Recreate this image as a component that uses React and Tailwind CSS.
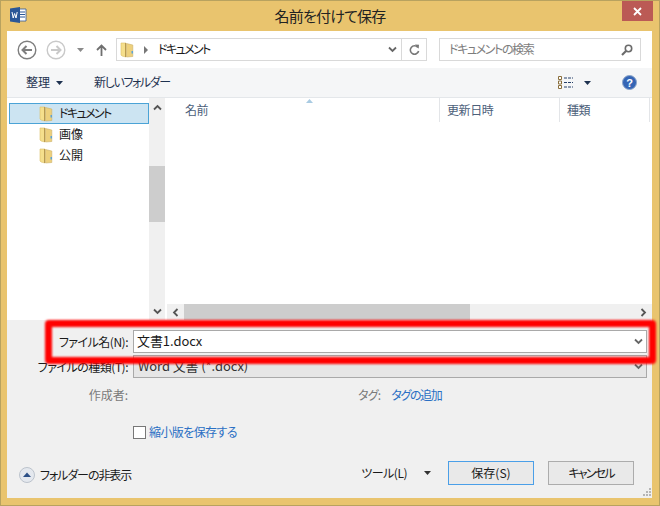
const font = { fontFamily: '"Noto Sans CJK JP","Liberation Sans",sans-serif', fontFeatureSettings: '"palt"' };

function Folder({ className = "" }) {
  return (
    <svg width="14" height="16" viewBox="0 0 14 16" className={className}>
      <path d="M1 1h5v14l-4-1-1-1z" fill="#f5df8c" stroke="#dcc06a" strokeWidth=".6" />
      <path d="M6.5 1.5 12.8 3v11.5L6.5 15z" fill="#edd07c" stroke="#cbb06a" strokeWidth=".6" />
      <path d="M5.5 1v14" stroke="#b89a50" strokeWidth="1" />
      <rect x="11.5" y="9" width="1.5" height="2.5" fill="#5aa3d8" />
    </svg>
  );
}

function Chevron({ up = false, color = "#666", className = "" }) {
  return (
    <svg width="9" height="7" viewBox="0 0 9 7" className={className}>
      <path d={up ? "M1 5.5 4.5 2 8 5.5" : "M1 1.5 4.5 5 8 1.5"} fill="none" stroke={color} strokeWidth="1.8" />
    </svg>
  );
}

function Caret({ color = "#1e3250" }) {
  return (
    <svg width="7" height="4" viewBox="0 0 7 4">
      <path d="M0 0h7L3.5 4z" fill={color} />
    </svg>
  );
}

function WordIcon() {
  return (
    <svg width="17" height="16" viewBox="0 0 17 16">
      <path d="M8 2h8v12H8z" fill="#fff" stroke="#2b5797" strokeWidth=".8" />
      <path d="M10 5h5M10 7.5h5M10 10h5" stroke="#2b5797" strokeWidth="1" />
      <path d="M0 1.5 10 0v16L0 14.5z" fill="#2b5797" />
      <path d="M2 5l1.2 6 1.4-4.5L6 11l1.2-6" fill="none" stroke="#fff" strokeWidth="1" />
    </svg>
  );
}

function NavCircle({ color, flip = false }) {
  return (
    <svg width="20" height="20" viewBox="0 0 20 20">
      <circle cx="10" cy="10" r="8.8" fill="#fff" stroke={color} strokeWidth="1.4" />
      <path d={flip ? "M5 10h9M10.5 6l4 4-4 4" : "M15 10H6M9.5 6 5.5 10l4 4"} fill="none" stroke={color} strokeWidth="2" />
    </svg>
  );
}

function Row({ active, label, className = "" }) {
  return (
    <div className={`h-[21px] flex items-center border ${active ? "bg-[#cce4f2] border-[#4ba3d6]" : "border-transparent"}`}>
      <Folder className="ml-[29px]" />
      <span className={`ml-[6px] mb-[1px] text-[12px] text-[#1a1a1a] ${className}`}>{label}</span>
    </div>
  );
}

function Header({ label, w }) {
  return (
    <div className="h-[24px] flex items-center border-r border-[#e3e5e8] shrink-0" style={{ width: w }}>
      <span className="ml-[7px] text-[12px] tracking-[-0.4px] text-[#4c607a]">{label}</span>
    </div>
  );
}

function Field({ label, children }) {
  return (
    <div className="flex items-center h-[23px]">
      <div className="w-[121px] mr-[5px] text-right text-[12px] tracking-[-0.5px] whitespace-nowrap text-[#1a1a1a]">{label}</div>
      {children}
    </div>
  );
}

export default function App() {
  return (
    <div style={font} className="relative w-[660px] h-[506px] bg-[#e9c46e] border border-[#b8a25f] flex flex-col overflow-hidden">
      <div className="h-[30px] shrink-0 relative flex items-center justify-center">
        <div className="absolute left-[9px] top-[6px]"><WordIcon /></div>
        <span className="text-[15px] tracking-[-0.8px] text-[#222]">名前を付けて保存</span>
        <div className="absolute right-[6px] top-0 w-[31px] h-[20px] bg-[#bb5a55] flex items-center justify-center">
          <svg width="9" height="9" viewBox="0 0 9 9"><path d="M1 1l7 7M8 1 1 8" stroke="#fff" strokeWidth="1.8" /></svg>
        </div>
      </div>

      <div className="ml-[6px] mr-[7px] h-[467px] shrink-0 flex flex-col bg-[#f0f0f0]">
        <div className="h-[37px] shrink-0 bg-white flex items-center">
          <div className="ml-[10px]"><NavCircle color="#7e7e7e" /></div>
          <div className="ml-[9px]"><NavCircle color="#c9c9c9" flip /></div>
          <div className="ml-[11px]"><Caret color="#8a8a8a" /></div>
          <svg width="11" height="12" viewBox="0 0 11 12" className="ml-[12px]"><path d="M5.5 12V2M1 6l4.5-4.5L10 6" fill="none" stroke="#6f6f6f" strokeWidth="1.8" /></svg>
          <div className="ml-[9px] w-[311px] h-[23px] border border-[#d9d9d9] flex items-center">
            <Folder className="ml-[3px]" />
            <svg width="4" height="8" viewBox="0 0 4 8" className="ml-[10px]"><path d="M0 0l4 4-4 4z" fill="#777" /></svg>
            <span className="ml-[10px] mb-[2px] text-[12px] tracking-[-1.6px] text-[#1a1a1a]">ドキュメント</span>
            <Chevron className="ml-auto mr-[4px]" />
            <div className="w-[25px] h-full border-l border-[#d9d9d9] flex items-center justify-center">
              <svg width="11" height="12" viewBox="0 0 11 12"><path d="M8.8 3.4A4.2 4.2 0 1 0 9.6 7" fill="none" stroke="#777" strokeWidth="1.6" /><path d="M6 0.5l4 .3-.3 4z" fill="#777" /></svg>
            </div>
          </div>
          <div className="ml-[12px] w-[202px] h-[23px] border border-[#d9d9d9] flex items-center">
            <span className="ml-[9px] mb-[2px] text-[12px] tracking-[-1.4px] text-[#7d7d7d]">ドキュメントの検索</span>
            <svg width="12" height="12" viewBox="0 0 12 12" className="ml-auto mr-[7px]"><circle cx="7.5" cy="4.5" r="3.2" fill="none" stroke="#6b6b6b" strokeWidth="1.6" /><path d="M5 7 1 11" stroke="#6b6b6b" strokeWidth="2.2" /></svg>
          </div>
        </div>

        <div className="h-[30px] shrink-0 bg-[#f5f6f7] border-b border-[#e4e7ea] flex items-center">
          <span className="ml-[19px] mb-[1px] text-[12px] text-[#1e3250]">整理</span>
          <div className="ml-[6px]"><Caret /></div>
          <span className="ml-[31px] mb-[1px] text-[12px] tracking-[-1.4px] text-[#1e3250]">新しいフォルダー</span>
          <svg width="15" height="13" viewBox="0 0 15 13" className="ml-auto">
            <path d="M.5.5h3v3h-3zM.5 5h3v3h-3zM.5 9.5h3v3h-3z" fill="#fff" stroke="#8a6f3c" />
            <path d="M6 2h9M6 6.5h9M6 11h9" stroke="#26406a" strokeWidth="1" strokeDasharray="3 1" />
          </svg>
          <div className="ml-[11px]"><Caret /></div>
          <svg width="15" height="15" viewBox="0 0 15 15" className="ml-[31px] mr-[15px]">
            <circle cx="7.5" cy="7.5" r="7" fill="#3565b5" stroke="#8aa4c8" />
            <text x="7.5" y="11.5" textAnchor="middle" fontSize="11" fontWeight="700" fill="#fff" fontFamily="Liberation Sans">?</text>
          </svg>
        </div>

        <div className="h-[222px] shrink-0 flex bg-white">
          <div className="w-[142px] shrink-0 pl-[2px] pt-[5px] flex flex-col">
            <Row active label="ドキュメント" className="tracking-[-1.6px]" />
            <Row label="画像" />
            <Row label="公開" />
          </div>
          <div className="w-[16px] shrink-0 bg-[#f0f0f0] flex flex-col items-center">
            <div className="h-[18px] flex items-center"><Chevron up color="#555" /></div>
            <div className="mt-[50px] w-full h-[56px] bg-[#cdcdcd]" />
            <div className="mt-auto h-[18px] flex items-center"><Chevron color="#555" /></div>
          </div>
          <div className="ml-[1px] flex-1 min-w-0 flex flex-col">
            <div className="relative flex pl-[12px]">
              <Header label="名前" w={262} />
              <Header label="更新日時" w={120} />
              <Header label="種類" w={90} />
              <svg width="7" height="4" viewBox="0 0 7 4" className="absolute left-[140px] top-[1px]"><path d="M0 4 3.5 0 7 4z" fill="#a9cbe2" /></svg>
            </div>
            <div className="mt-auto ml-[1px] h-[16px] bg-[#f0f0f0] flex items-center">
              <div className="w-[17px] flex justify-center"><svg width="7" height="9" viewBox="0 0 7 9"><path d="M5.5 1 2 4.5 5.5 8" fill="none" stroke="#555" strokeWidth="1.8" /></svg></div>
              <div className="w-[286px] h-full bg-[#cdcdcd]" />
              <div className="ml-auto w-[18px] flex justify-center"><svg width="7" height="9" viewBox="0 0 7 9"><path d="M1.5 1 5 4.5 1.5 8" fill="none" stroke="#555" strokeWidth="1.8" /></svg></div>
            </div>
          </div>
        </div>

        <div className="flex-1 relative pt-[10px] pr-[5px] flex flex-col">
          <Field label="ファイル名(N):">
            <div className="flex-1 h-[23px] bg-white border border-[#a9a9a9] flex items-center">
              <span className="ml-[3px] mb-[1px] text-[13px] tracking-[-0.1px] text-[#1a1a1a]">文書1.docx</span>
              <Chevron className="ml-auto mr-[3px]" />
            </div>
          </Field>
          <div className="mt-[2px]">
            <Field label="ファイルの種類(T):">
              <div className="flex-1 h-[23px] bg-[#e6e6e6] border border-[#a9a9a9] flex items-center">
                <span className="ml-[4px] mb-[1px] text-[13px] tracking-[-0.1px] text-[#333]">Word 文書 (*.docx)</span>
                <Chevron className="ml-auto mr-[3px]" />
              </div>
            </Field>
          </div>
          <div className="mt-[6px] flex items-center h-[22px]">
            <div className="w-[121px] text-right text-[12px] text-[#7a7a7a]">作成者:</div>
            <span className="ml-[230px] text-[12px] tracking-[-0.8px] text-[#7a7a7a]">タグ:</span>
            <span className="ml-[11px] text-[12px] tracking-[-1.4px] text-[#2a6fc4]">タグの追加</span>
          </div>
          <div className="mt-[17px] flex items-center h-[18px] ml-[126px]">
            <div className="w-[13px] h-[13px] bg-white border border-[#777]" />
            <span className="ml-[3px] text-[12px] tracking-[-0.6px] text-[#2a6fc4]">縮小版を保存する</span>
          </div>
          <div className="mt-[20px] flex items-center h-[24px]">
            <svg width="16" height="16" viewBox="0 0 16 16" className="ml-[12px] mt-[3px]">
              <circle cx="8" cy="8" r="7.5" fill="#e4e8ee" stroke="#bcc3cc" />
              <path d="M4 10 8 5.5l4 4.5z" fill="#2c4f86" />
            </svg>
            <span className="ml-[5px] mt-[3px] text-[12px] tracking-[-1.1px] text-[#1a1a1a]">フォルダーの非表示</span>
            <span className="ml-auto text-[12px] tracking-[-0.5px] text-[#1a1a1a]">ツール(L)</span>
            <div className="ml-[17px]"><Caret color="#333" /></div>
            <div className="ml-[17px] w-[86px] h-[24px] bg-[#e9e9e9] border border-[#4a9fe8] flex items-center justify-center text-[12px] text-[#1a1a1a]">保存(S)</div>
            <div className="ml-[14px] mr-[13px] w-[86px] h-[24px] bg-[#e9e9e9] border border-[#acacac] flex items-center justify-center text-[12px] tracking-[-1.8px] text-[#1a1a1a]">キャンセル</div>
          </div>
          <svg width="9" height="9" viewBox="0 0 9 9" className="absolute right-[0px] bottom-[1px]">
            <path d="M6 0h2v2H6zM3 3h2v2H3zM6 3h2v2H6zM0 6h2v2H0zM3 6h2v2H3zM6 6h2v2H6z" fill="#b5b5b5" />
          </svg>
        </div>
      </div>

      <div className="absolute left-[44px] top-[319px] w-[611px] h-[44px] border-[7px] border-[#ff0000] rounded-[4px] blur-[1px]" />
    </div>
  );
}
